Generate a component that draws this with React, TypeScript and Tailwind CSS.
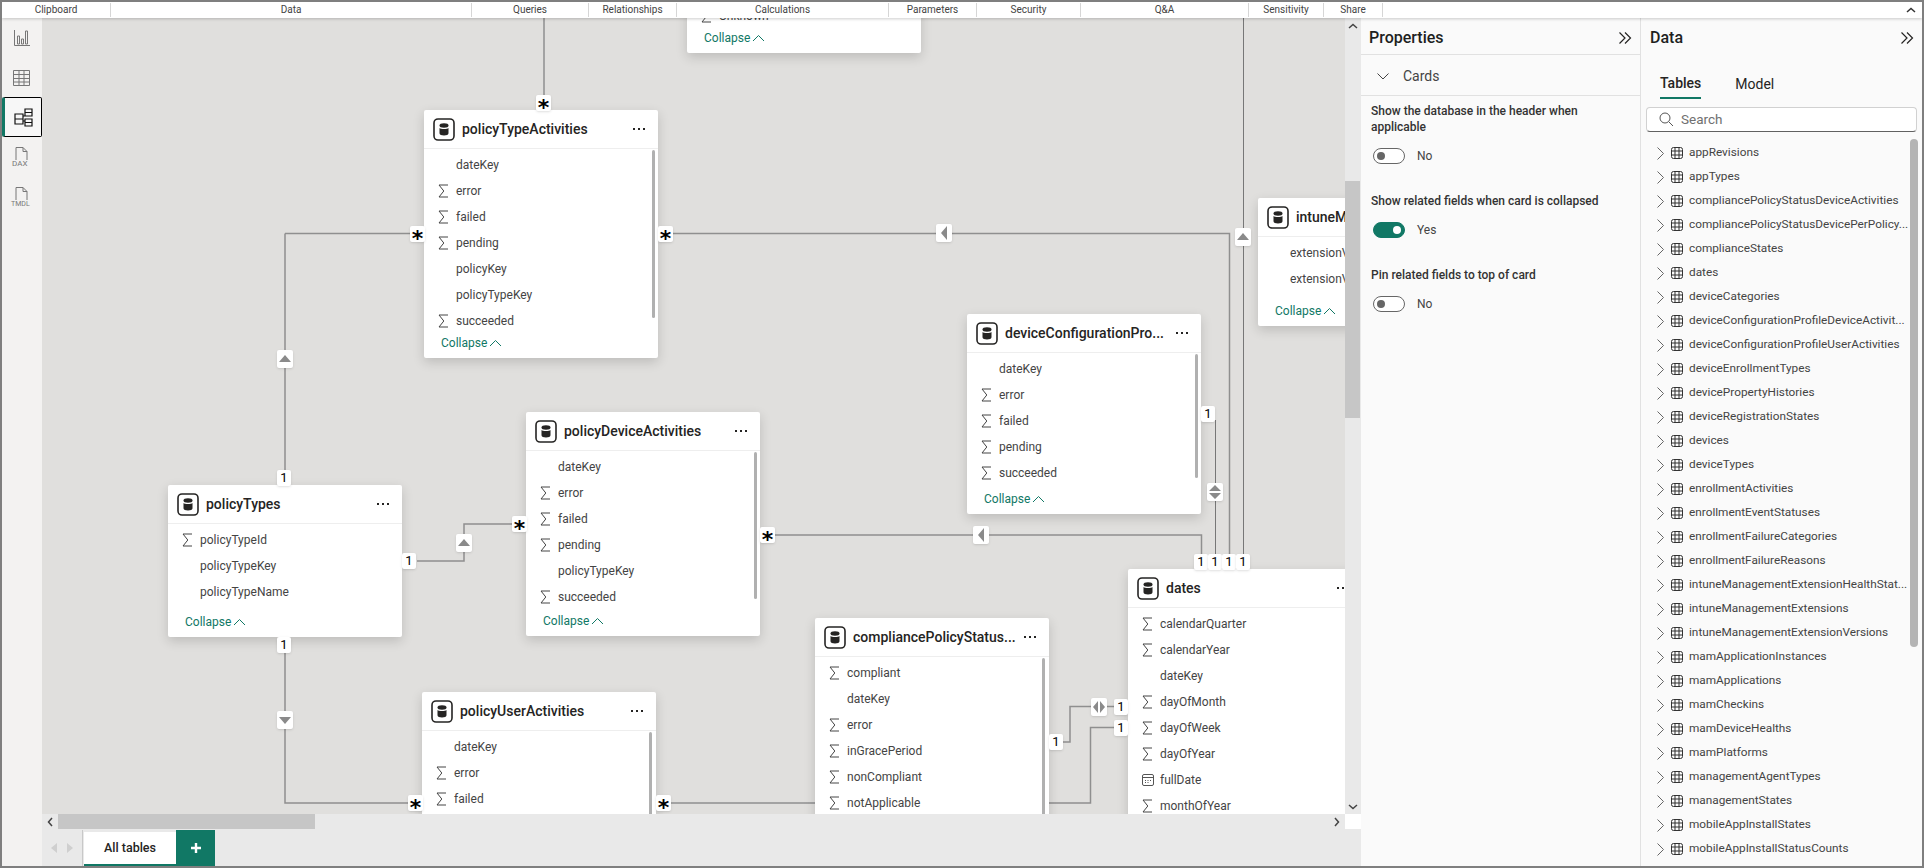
import React from 'react';

const ribbon = [
  { label: 'Clipboard', w: 'w-[109px]' },
  { label: 'Data', w: 'w-[361px]' },
  { label: 'Queries', w: 'w-[117px]' },
  { label: 'Relationships', w: 'w-[88px]' },
  { label: 'Calculations', w: 'w-[212px]' },
  { label: 'Parameters', w: 'w-[88px]' },
  { label: 'Security', w: 'w-[104px]' },
  { label: 'Q&A', w: 'w-[168px]' },
  { label: 'Sensitivity', w: 'w-[75px]' },
  { label: 'Share', w: 'w-[59px]' },
];

const tables = [
  'appRevisions',
  'appTypes',
  'compliancePolicyStatusDeviceActivities',
  'compliancePolicyStatusDevicePerPolicy...',
  'complianceStates',
  'dates',
  'deviceCategories',
  'deviceConfigurationProfileDeviceActivit...',
  'deviceConfigurationProfileUserActivities',
  'deviceEnrollmentTypes',
  'devicePropertyHistories',
  'deviceRegistrationStates',
  'devices',
  'deviceTypes',
  'enrollmentActivities',
  'enrollmentEventStatuses',
  'enrollmentFailureCategories',
  'enrollmentFailureReasons',
  'intuneManagementExtensionHealthStat...',
  'intuneManagementExtensions',
  'intuneManagementExtensionVersions',
  'mamApplicationInstances',
  'mamApplications',
  'mamCheckins',
  'mamDeviceHealths',
  'mamPlatforms',
  'managementAgentTypes',
  'managementStates',
  'mobileAppInstallStates',
  'mobileAppInstallStatusCounts',
];

type Field = [string, 's' | 'c' | ''];

const cards: { title: string; pos: string; bar?: string; collapse: boolean; fields: Field[] }[] = [
  {
    title: 'policyTypeActivities',
    pos: 'left-[382px] top-[92px] h-[248px]',
    bar: 'right-[3px] top-[40px] h-[168px]',
    collapse: true,
    fields: [['dateKey', ''], ['error', 's'], ['failed', 's'], ['pending', 's'], ['policyKey', ''], ['policyTypeKey', ''], ['succeeded', 's']],
  },
  {
    title: 'policyDeviceActivities',
    pos: 'left-[484px] top-[394px] h-[224px]',
    bar: 'right-[3px] top-[40px] h-[147px]',
    collapse: true,
    fields: [['dateKey', ''], ['error', 's'], ['failed', 's'], ['pending', 's'], ['policyTypeKey', ''], ['succeeded', 's']],
  },
  {
    title: 'policyTypes',
    pos: 'left-[126px] top-[467px] h-[152px]',
    collapse: true,
    fields: [['policyTypeId', 's'], ['policyTypeKey', ''], ['policyTypeName', '']],
  },
  {
    title: 'policyUserActivities',
    pos: 'left-[380px] top-[674px] h-[240px]',
    bar: 'right-[4px] top-[40px] h-[168px]',
    collapse: false,
    fields: [['dateKey', ''], ['error', 's'], ['failed', 's']],
  },
  {
    title: 'compliancePolicyStatus...',
    pos: 'left-[773px] top-[600px] h-[300px]',
    bar: 'right-[4px] top-[40px] h-[168px]',
    collapse: false,
    fields: [['compliant', 's'], ['dateKey', ''], ['error', 's'], ['inGracePeriod', 's'], ['nonCompliant', 's'], ['notApplicable', 's']],
  },
  {
    title: 'dates',
    pos: 'left-[1086px] top-[551px] h-[300px]',
    collapse: false,
    fields: [['calendarQuarter', 's'], ['calendarYear', 's'], ['dateKey', ''], ['dayOfMonth', 's'], ['dayOfWeek', 's'], ['dayOfYear', 's'], ['fullDate', 'c'], ['monthOfYear', 's']],
  },
  {
    title: 'deviceConfigurationPro...',
    pos: 'left-[925px] top-[296px] h-[200px]',
    bar: 'right-[3px] top-[40px] h-[124px]',
    collapse: true,
    fields: [['dateKey', ''], ['error', 's'], ['failed', 's'], ['pending', 's'], ['succeeded', 's']],
  },
  {
    title: 'intuneManagementExtensionVersions',
    pos: 'left-[1216px] top-[180px] h-[128px]',
    collapse: true,
    fields: [['extensionVersion', ''], ['extensionVersionKey', '']],
  },
];

// relationship lines, in page coordinates
const thickLines = [
  'M544 18V96',
  'M285 233.5V472M285 233.5H412',
  'M672 233.5H1229.5V556',
  'M417 561H464V524H514',
  'M775 535H1201.5V556',
  'M285 650V803H410',
  'M670 803H815',
  'M1049 803H1090.5V727.5H1116',
  'M1063 742H1070V706.5H1116',
];
const thinLines = ['M1243.5 18V556', 'M1215.5 420V556'];

const stars = [
  'left-[494px] top-[77px]',
  'left-[368px] top-[208px]',
  'left-[616px] top-[208px]',
  'left-[470px] top-[498px]',
  'left-[718px] top-[509px]',
  'left-[366px] top-[777px]',
  'left-[614px] top-[777px]',
];
const ones = [
  'left-[235px] top-[452px]',
  'left-[235px] top-[619px]',
  'left-[360px] top-[535px]',
  'left-[1152px] top-[536px]',
  'left-[1166px] top-[536px]',
  'left-[1180px] top-[536px]',
  'left-[1194px] top-[536px]',
  'left-[1159px] top-[388px]',
  'left-[1072px] top-[681px]',
  'left-[1072px] top-[702px]',
  'left-[1007px] top-[716px]',
];
const arrows: { pos: string; d: string }[] = [
  { pos: 'left-[235px] top-[332px]', d: 'M2 12L8 5L14 12Z' },
  { pos: 'left-[414px] top-[516px]', d: 'M2 12L8 5L14 12Z' },
  { pos: 'left-[1193px] top-[210px]', d: 'M2 12L8 5L14 12Z' },
  { pos: 'left-[235px] top-[693px]', d: 'M2 6L8 13L14 6Z' },
  { pos: 'left-[894px] top-[206px]', d: 'M11 2L5 9L11 16Z' },
  { pos: 'left-[931px] top-[508px]', d: 'M11 2L5 9L11 16Z' },
  { pos: 'left-[1165px] top-[465px]', d: 'M2 8L8 2L14 8ZM2 10L8 16L14 10Z' },
  { pos: 'left-[1049px] top-[680px]', d: 'M7 3L2 9L7 15ZM9 3L14 9L9 15Z' },
];

const DbIcon = () => (
  <svg width="22" height="23" viewBox="0 0 22 23" className="shrink-0">
    <rect x="1" y="1" width="20" height="21" rx="4" fill="white" stroke="#252423" strokeWidth="1.6" />
    <ellipse cx="11" cy="7.5" rx="4.5" ry="2.2" fill="#252423" />
    <path d="M6.5 10c1 1.4 8 1.4 9 0v5.2c0 1.3-2 2.3-4.5 2.3s-4.5-1-4.5-2.3z" fill="#252423" />
  </svg>
);

const Sigma = () => (
  <svg width="11" height="14" viewBox="0 0 11 14" className="shrink-0">
    <path d="M10 1H1l4.8 6L1 13h9" fill="none" stroke="#444" strokeWidth="1" />
  </svg>
);

const CalendarIcon = () => (
  <svg width="12" height="14" viewBox="0 0 12 14" className="shrink-0">
    <rect x="0.5" y="1.5" width="11" height="11" rx="1.5" fill="none" stroke="#555" />
    <path d="M1 4.5H11" stroke="#555" />
    <path d="M3 7.5h1M5.5 7.5h1M8 7.5h1M3 9.5h1M5.5 9.5h1" stroke="#555" />
  </svg>
);

const ChevronUp = () => (
  <svg width="13" height="8" viewBox="0 0 13 8">
    <path d="M1 7L6.5 1.5L12 7" fill="none" stroke="#117865" strokeWidth="1" />
  </svg>
);

const ChevronsRight = () => (
  <svg width="14" height="14" viewBox="0 0 14 14">
    <path d="M1.5 1.5L7 7l-5.5 5.5M7 1.5L12.5 7 7 12.5" fill="none" stroke="#252423" strokeWidth="1.2" />
  </svg>
);

const GridIcon = () => (
  <svg width="12" height="12" viewBox="0 0 12 12" className="shrink-0 block">
    <rect x="0.5" y="0.5" width="11" height="11" rx="2" fill="none" stroke="#333" />
    <path d="M4 .5v11M8 .5v11M.5 4h11M.5 8h11" stroke="#333" />
  </svg>
);

const Card = ({ card }: { card: (typeof cards)[number] }) => (
  <div className={`absolute ${card.pos} w-[234px] flex flex-col bg-white rounded-[2px] shadow-[0_4px_12px_rgba(0,0,0,0.16)]`}>
    <div className="h-[39px] shrink-0 flex items-center pl-[9px] pr-[13px] border-b border-[#eeeeee]">
      <DbIcon />
      <span className="ml-[7px] flex-1 overflow-hidden whitespace-nowrap text-[14px] font-medium text-[#252423]">{card.title}</span>
      <span className="ml-2 w-[12px] flex justify-between shrink-0">
        <i className="w-[2px] h-[2px] bg-[#252423]" />
        <i className="w-[2px] h-[2px] bg-[#252423]" />
        <i className="w-[2px] h-[2px] bg-[#252423]" />
      </span>
    </div>
    <div className="flex-1 pt-[3px] overflow-hidden">
      {card.fields.map(([name, icon]) => (
        <div key={name} className="h-[26px] flex items-center pl-[14px] text-[12px] text-[#444444]">
          <span className="w-[18px] flex">
            {icon === 's' && <Sigma />}
            {icon === 'c' && <CalendarIcon />}
          </span>
          <span className="whitespace-nowrap">{name}</span>
        </div>
      ))}
    </div>
    {card.collapse && (
      <div className="h-[30px] shrink-0 flex items-center gap-[2px] pl-[17px] text-[12px] text-[#117865]">
        Collapse <ChevronUp />
      </div>
    )}
    {card.bar && <div className={`absolute ${card.bar} w-[3px] rounded-full bg-[#b0b0b0]`} />}
  </div>
);

const Toggle = ({ on, label }: { on?: boolean; label: string }) => (
  <div className="h-[16px] flex items-center gap-[12px] ml-[12px]">
    <div className={`w-[32px] h-[16px] rounded-full border flex items-center px-[3px] ${on ? 'bg-[#117865] border-[#117865] justify-end' : 'bg-white border-[#666666]'}`}>
      <div className={`w-[8px] h-[8px] rounded-full ${on ? 'bg-white' : 'bg-[#666666]'}`} />
    </div>
    <span className="text-[12px] text-[#444444]">{label}</span>
  </div>
);

const RailIcon = ({ children, active, short }: { children: React.ReactNode; active?: boolean; short?: boolean }) => (
  <div className={`${short ? 'h-[39px]' : 'h-[40px]'} flex items-center justify-center ${active ? 'rounded-[2px] border-[1.5px] border-black border-l-[3px] border-l-[#117865] bg-[#f7f7f7]' : ''}`}>
    {children}
  </div>
);

export default function App() {
  return (
    <div className="w-[1924px] h-[868px] overflow-hidden flex flex-col border-2 border-[#7f7f7f] bg-[#fafafa] text-[#252423] font-['Roboto',sans-serif]">
      {/* Ribbon group labels */}
      <div className="h-[16px] shrink-0 flex items-center bg-white shadow-[0_1px_3px_rgba(0,0,0,0.2)] z-20 relative">
        {ribbon.map((r) => (
          <div key={r.label} className={`${r.w} h-[14px] flex items-center justify-center border-r border-[#d6d6d6] text-[10px] leading-none text-[#444444]`}>
            {r.label}
          </div>
        ))}
        <svg width="10" height="6" viewBox="0 0 10 6" className="absolute right-[6px] top-[5px]">
          <path d="M1 5L5 1.5L9 5" fill="none" stroke="#333" strokeWidth="1.5" />
        </svg>
      </div>

      <div className="flex-1 flex min-h-0">
        {/* View rail */}
        <div className="w-[40px] shrink-0 bg-[#f3f2f1] flex flex-col">
          <RailIcon>
            <svg width="20" height="20" viewBox="0 0 20 20" fill="none" stroke="#777">
              <path d="M2.5 2v15.5H18M5.5 8h2v8h-2zM9.5 11h2v5h-2zM13.5 3h2v13h-2z" />
            </svg>
          </RailIcon>
          <RailIcon short>
            <svg width="20" height="18" viewBox="0 0 20 18" fill="none" stroke="#777">
              <path d="M1.5 1.5h16v15h-16zM1.5 5.5h16M1.5 9.5h16M1.5 13h16M7 1.5v15M12 1.5v15" />
            </svg>
          </RailIcon>
          <RailIcon active>
            <svg width="19" height="19" viewBox="0 0 19 19" fill="none" stroke="#111" strokeWidth="1.2">
              <path d="M1 6h8v10H1zM1 11h8M11 1h7v7h-7zM11 4.5h7M11 11h7v7h-7zM11 14.5h7M9 8h2M9 13h2" />
            </svg>
          </RailIcon>
          <RailIcon>
            <svg width="24" height="22" viewBox="0 0 24 22" fill="none" stroke="#777">
              <path d="M6 14V1.5h7l4 4V14M13 1.5v4h4" />
              <text x="2" y="20" fontSize="8" fill="#777" stroke="none" fontFamily="Roboto">DAX</text>
            </svg>
          </RailIcon>
          <RailIcon>
            <svg width="24" height="22" viewBox="0 0 24 22" fill="none" stroke="#777">
              <path d="M6 14V1.5h7l4 4V14M13 1.5v4h4" />
              <text x="1" y="20" fontSize="7" fill="#777" stroke="none" fontFamily="Roboto">TMDL</text>
            </svg>
          </RailIcon>
        </div>

        {/* Diagram area with scrollbars and page tabs */}
        <div className="w-[1319px] shrink-0 flex flex-col bg-[#e9e9e9]">
          <div className="flex-1 min-h-0 flex">
            <div className="relative flex-1 overflow-hidden bg-[#e0dfdd]">
              <svg width="1303" height="796" viewBox="42 18 1303 796" fill="none" className="absolute inset-0">
                {thickLines.map((d) => (
                  <path key={d} d={d} stroke="#8f8f8f" strokeWidth="1.5" />
                ))}
                {thinLines.map((d) => (
                  <path key={d} d={d} stroke="#777" strokeWidth="1" />
                ))}
              </svg>

              {/* card cut off at the top edge */}
              <div className="absolute left-[645px] top-[-16px] w-[234px] h-[51px] bg-white rounded-[2px] shadow-[0_4px_12px_rgba(0,0,0,0.16)] flex flex-col overflow-hidden">
                <div className="h-[21px] shrink-0 flex items-end pl-[14px] text-[12px] leading-[14px] text-[#444444]">
                  <span className="w-[18px] flex"><Sigma /></span>
                  Unknown
                </div>
                <div className="flex-1 flex items-center gap-[2px] pl-[17px] text-[12px] text-[#117865]">
                  Collapse <ChevronUp />
                </div>
              </div>

              {cards.map((c) => (
                <Card key={c.title} card={c} />
              ))}

              {stars.map((pos) => (
                <div key={pos} className={`absolute ${pos} w-[15px] h-[16px] bg-white rounded-[2px] shadow-sm flex justify-center overflow-hidden text-[22px] font-bold leading-[26px] text-black font-['DejaVu_Sans',sans-serif]`}>
                  *
                </div>
              ))}
              {ones.map((pos) => (
                <div key={pos} className={`absolute ${pos} w-[14px] h-[16px] bg-white rounded-[2px] shadow-sm flex items-center justify-center text-[13px] text-black`}>
                  1
                </div>
              ))}
              {arrows.map((a) => (
                <div key={a.pos} className={`absolute ${a.pos} w-[16px] h-[18px] bg-white rounded-[2px] shadow-sm`}>
                  <svg width="16" height="18" viewBox="0 0 16 18">
                    <path d={a.d} fill="#8a8a8a" />
                  </svg>
                </div>
              ))}
            </div>

            {/* vertical scrollbar */}
            <div className="relative w-[16px] shrink-0 bg-[#e9e9e9]">
              <svg width="10" height="6" viewBox="0 0 10 6" className="absolute left-[3px] top-[5px]">
                <path d="M1 5L5 1.5L9 5" fill="none" stroke="#444" strokeWidth="1.5" />
              </svg>
              <div className="absolute left-0 top-[163px] w-[15px] h-[237px] bg-[#c6c6c6]" />
              <svg width="10" height="6" viewBox="0 0 10 6" className="absolute left-[3px] bottom-[4px]">
                <path d="M1 1L5 4.5L9 1" fill="none" stroke="#444" strokeWidth="1.5" />
              </svg>
            </div>
          </div>

          {/* horizontal scrollbar */}
          <div className="h-[15px] shrink-0 flex items-center">
            <div className="w-[16px] flex justify-center">
              <svg width="6" height="10" viewBox="0 0 6 10">
                <path d="M5 1L1.5 5L5 9" fill="none" stroke="#444" strokeWidth="1.5" />
              </svg>
            </div>
            <div className="w-[257px] h-[15px] bg-[#c6c6c6]" />
            <div className="flex-1" />
            <div className="w-[16px] flex justify-center">
              <svg width="6" height="10" viewBox="0 0 6 10">
                <path d="M1 1L4.5 5L1 9" fill="none" stroke="#444" strokeWidth="1.5" />
              </svg>
            </div>
            <div className="w-[16px] h-[15px] bg-white" />
          </div>

          {/* page tabs */}
          <div className="h-[37px] shrink-0 flex items-stretch pt-[1px]">
            <div className="w-[41px] flex items-center justify-center gap-[10px] border-r border-[#c8c8c8]">
              <svg width="6" height="10" viewBox="0 0 6 10"><path d="M6 0L0 5L6 10Z" fill="#cfcfcf" /></svg>
              <svg width="6" height="10" viewBox="0 0 6 10"><path d="M0 0L6 5L0 10Z" fill="#cfcfcf" /></svg>
            </div>
            <div className="w-[92px] ml-[1px] mt-[2px] flex items-center justify-center bg-white border-b-2 border-[#117865] text-[12.5px] font-medium text-[#252423]">
              All tables
            </div>
            <div className="w-[39px] flex items-center justify-center bg-[#117865]">
              <svg width="12" height="12" viewBox="0 0 12 12">
                <path d="M6 1v10M1 6h10" stroke="white" strokeWidth="2.4" />
              </svg>
            </div>
          </div>
        </div>

        {/* Properties pane */}
        <div className="w-[280px] shrink-0 border-r border-[#e1e1e1] bg-[#fafafa]">
          <div className="h-[37px] flex items-center justify-between pt-[3px] pl-[8px] pr-[8px] border-b border-[#e1e1e1]">
            <span className="text-[16px] font-medium text-[#201f1e]">Properties</span>
            <ChevronsRight />
          </div>
          <div className="h-[41px] flex items-center pl-[16px] pt-[2px] border-b border-[#e1e1e1]">
            <svg width="12" height="7" viewBox="0 0 12 7">
              <path d="M0.5 0.5L6 6L11.5 0.5" fill="none" stroke="#444" />
            </svg>
            <span className="ml-[14px] text-[14px] text-[#444444]">Cards</span>
          </div>
          <div className="pl-[10px] pr-[10px] pt-[7px] text-[12px] font-medium leading-[16px] text-[#333333]">
            Show the database in the header when applicable
          </div>
          <div className="mt-[13px]"><Toggle label="No" /></div>
          <div className="pl-[10px] mt-[29px] text-[12px] font-medium leading-[16px] text-[#333333]">
            Show related fields when card is collapsed
          </div>
          <div className="mt-[13px]"><Toggle on label="Yes" /></div>
          <div className="pl-[10px] mt-[29px] text-[12px] font-medium leading-[16px] text-[#333333]">
            Pin related fields to top of card
          </div>
          <div className="mt-[13px]"><Toggle label="No" /></div>
        </div>

        {/* Data pane */}
        <div className="flex-1 min-w-0 relative bg-[#fafafa] overflow-hidden">
          <div className="h-[37px] flex items-center justify-between pt-[3px] pl-[9px] pr-[8px]">
            <span className="text-[16px] font-medium text-[#201f1e]">Data</span>
            <ChevronsRight />
          </div>
          <div className="flex h-[44px] pl-[19px] gap-[34px] text-[14px]">
            <div className="h-[44px] flex items-center border-b-2 border-[#117865] font-medium text-[#252423] pt-[15px]">Tables</div>
            <div className="h-[44px] flex items-center text-[#252423] pt-[15px]">Model</div>
          </div>
          <div className="mx-[5px] mt-[8px] w-[271px] h-[25px] flex items-center bg-white rounded-[4px] border border-[#d1d1d1] border-b-[#616161] pl-[12px]">
            <svg width="15" height="15" viewBox="0 0 15 15" fill="none" stroke="#555">
              <circle cx="6" cy="6" r="5" />
              <path d="M9.8 9.8L14 14" />
            </svg>
            <span className="ml-[7px] text-[13.5px] text-[#707070]">Search</span>
          </div>
          <div className="mt-[9px]">
            {tables.map((t) => (
              <div key={t} className="h-[24px] flex items-center pl-[16px] text-[11.8px] text-[#444444]">
                <svg width="7" height="13" viewBox="0 0 7 13" className="shrink-0">
                  <path d="M0.5 0.5L6.5 6.5L0.5 12.5" fill="none" stroke="#666" />
                </svg>
                <span className="ml-[7px]"><GridIcon /></span>
                <span className="ml-[6px] whitespace-nowrap">{t}</span>
              </div>
            ))}
          </div>
          <div className="absolute right-[4px] top-[121px] w-[8px] h-[508px] rounded-full bg-[#b4b4b4]" />
        </div>
      </div>
    </div>
  );
}
